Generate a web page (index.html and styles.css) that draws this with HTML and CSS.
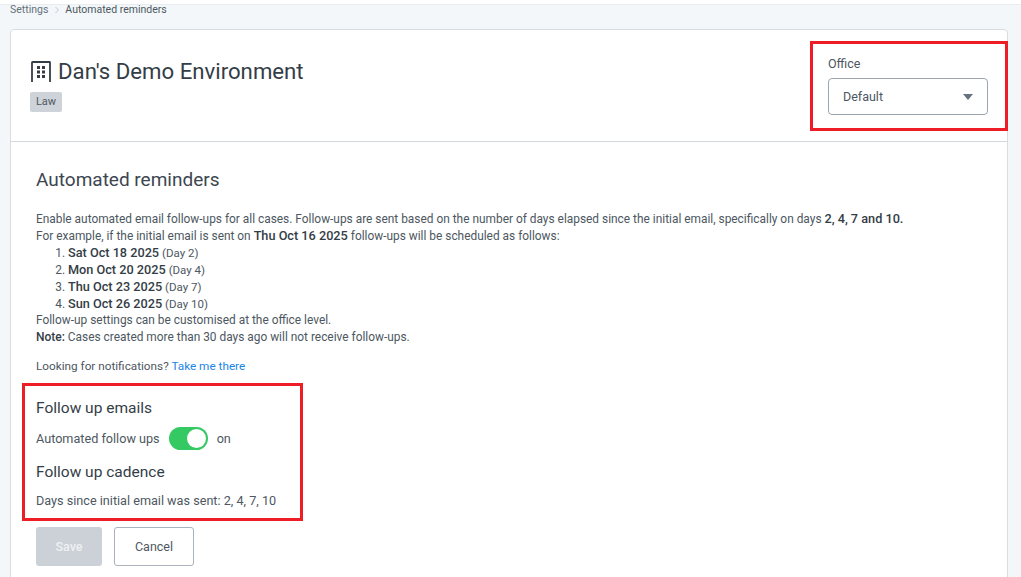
FILE: index.html
```html
<!DOCTYPE html>
<html lang="en">
<head>
<meta charset="utf-8">
<title>Automated reminders</title>
<link rel="stylesheet" href="styles.css">
</head>
<body>
<div class="topline"></div>
<nav class="crumbs"><span>Settings</span><svg class="chev" width="6" height="8" viewBox="0 0 6 8"><path d="M1.5 1l3 3-3 3" fill="none" stroke="#c3cad1" stroke-width="1"/></svg><span class="cur">Automated reminders</span></nav>
<main class="card">
  <header class="head">
    <div class="head-left">
      <h1 class="title"><svg class="bld" width="20" height="21" viewBox="0 0 20 21"><path d="M1 21V1.500q0-.5.5-.5h17q.5 0 .5.5V21" fill="none" stroke="#343d46" stroke-width="1.800"/><path d="M6 5h3v3H6zM11 5h3v3h-3zM6 9.500h3v3H6zM11 9.500h3v3h-3zM6 14h3v3H6zM11 14h3v3h-3z" fill="#343d46"/></svg>Dan's Demo Environment</h1>
      <span class="tag">Law</span>
    </div>
    <div class="office">
      <label class="office-label">Office</label>
      <div class="select"><span>Default</span><svg width="10" height="6" viewBox="0 0 10 6"><path d="M0 0h10L5 6z" fill="#66727f"/></svg></div>
    </div>
  </header>
  <section class="body">
    <h2 class="h2">Automated reminders</h2>
    <div class="copy">
      <p>Enable automated email follow-ups for all cases. Follow-ups are sent based on the number of days elapsed since the initial email, specifically on days <b>2, 4, 7 and 10.</b></p>
      <p>For example, if the initial email is sent on <b>Thu Oct 16 2025</b> follow-ups will be scheduled as follows:</p>
      <ol class="list">
        <li><b>Sat Oct 18 2025</b> <small>(Day 2)</small></li>
        <li><b>Mon Oct 20 2025</b> <small>(Day 4)</small></li>
        <li><b>Thu Oct 23 2025</b> <small>(Day 7)</small></li>
        <li><b>Sun Oct 26 2025</b> <small>(Day 10)</small></li>
      </ol>
      <p>Follow-up settings can be customised at the office level.</p>
      <p><b class="note">Note:</b> Cases created more than 30 days ago will not receive follow-ups.</p>
      <p class="notif">Looking for notifications? <a class="link" href="#">Take me there</a></p>
    </div>
    <div class="follow">
      <h3 class="h3">Follow up emails</h3>
      <div class="toggle-row"><span>Automated follow ups</span><span class="toggle"><span class="knob"></span></span><span>on</span></div>
      <h3 class="h3 second">Follow up cadence</h3>
      <p class="days">Days since initial email was sent: 2, 4, 7, 10</p>
    </div>
    <div class="actions"><button class="btn save">Save</button><button class="btn cancel">Cancel</button></div>
  </section>
</main>
<div class="redbox box-office"></div>
<div class="redbox box-follow"></div>
</body>
</html>
```
FILE: styles.css
```css
* { box-sizing: border-box; }
html, body { height: 100%; }
body {
  margin: 0;
  height: 577px;
  overflow: hidden;
  position: relative;
  background: #f3f7fa;
  color: #4d5761;
  font-family: "Roboto", "Noto Sans", sans-serif;
  font-size: 11.900px;
}
.topline { height: 5px; background: #fff; border-bottom: 1px solid #e9edf0; }
.crumbs { height: 24px; padding: 0 10px; display: flex; align-items: flex-start; gap: 5.500px; font-size: 10.500px; line-height: 9px; color: #66707a; }
.crumbs .cur { color: #4d5761; }
.chev { margin-top: 1px; }
.card { margin: 0 13px 0 10px; height: 560px; background: #fff; border: 1px solid #d8dde2; border-radius: 4px; }
.head { height: 112px; border-bottom: 1px solid #d3d8dd; display: flex; justify-content: space-between; padding: 27px 19px 0 19px; }
.title { margin: 0 0 0 1px; display: flex; align-items: center; gap: 7px; font-size: 22.200px; line-height: 28px; font-weight: 400; color: #343d46; }
.tag { display: inline-block; margin-top: 7px; width: 32px; text-align: center; height: 20px; line-height: 20px; background: #cdd3d8; border-radius: 2px; font-size: 11px; color: #4d5761; }
.office { width: 160px; }
.office-label { display: block; font-size: 12.500px; line-height: 16px; margin-top: -1px; color: #4d5761; }
.select { margin-top: 6px; height: 37px; border: 1px solid #9aa5af; border-radius: 4px; display: flex; justify-content: space-between; align-items: center; padding: 0 14px; font-size: 12.500px; }
.body { padding: 25px 25px 0; }
.h2 { margin: 0; font-size: 19px; line-height: 26px; font-weight: 400; color: #3c4650; }
.copy { margin-top: 18px; line-height: 16.900px; }
.copy p { margin: 0; }
.copy b { font-size: 12.700px; font-weight: 500; color: #343d46; line-height: 1; }
.copy b.note { font-size: 12px; }
.copy small { font-size: 11.500px; line-height: 1; }
.list { margin: 0; padding-left: 32px; }
.copy .notif { margin-top: 12px; font-size: 11.750px; }
.link { color: #1b84e7; text-decoration: none; }
.follow { margin-top: 23px; font-size: 12.650px; }
.h3 { margin: 0; font-size: 15.500px; line-height: 20px; font-weight: 400; color: #343d46; }
.toggle-row { margin-top: 9px; display: flex; align-items: center; gap: 9px; height: 23px; }
.toggle { width: 39px; height: 23px; border-radius: 12px; background: #34c963; position: relative; }
.knob { position: absolute; right: 2px; top: 2px; width: 19px; height: 19px; border-radius: 50%; background: #fff; }
.second { margin-top: 12px; }
.days { margin: 10px 0 0; line-height: 17px; }
.actions { margin-top: 18px; display: flex; gap: 12px; }
.btn { height: 39px; border-radius: 3px; font: 400 12.500px "Roboto", sans-serif; }
.save { width: 66px; background: #cbd1d6; border: 0; color: #eef1f3; font-weight: 500; }
.cancel { width: 80px; background: #fff; border: 1px solid #aab3bb; color: #4d5761; }
.redbox { position: absolute; border: 3px solid #ee1c25; pointer-events: none; }
.box-office { left: 810px; top: 41px; width: 198px; height: 90px; }
.box-follow { left: 22px; top: 383px; width: 281px; height: 138px; }
```
